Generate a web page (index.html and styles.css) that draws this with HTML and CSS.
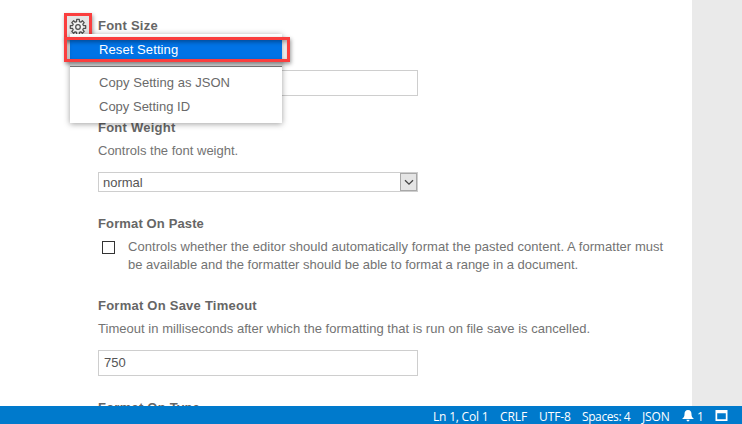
FILE: index.html
```html
<!DOCTYPE html>
<html lang="en">
<head>
<meta charset="utf-8">
<title>Settings</title>
<link rel="stylesheet" href="styles.css">
</head>
<body>
<div class="window">
  <div class="workspace">
    <main class="settings">
      <section class="setting font-size">
        <h2><span class="t-size">Font Size</span></h2>
        <div class="field"></div>
        <button class="gear" aria-label="More actions">
          <svg width="18" height="18" viewBox="0 0 18 18" fill="#f2f2f2" stroke="#505050" stroke-width="1.25" stroke-linejoin="round">
            <path d="M7.700 1.300h2.600l.1 2.300 1.430.59 1.550-1.410 1.840 1.840-1.410 1.550.59 1.430 2.300.1v2.600l-2.300.1-.59 1.430 1.410 1.550-1.840 1.840-1.550-1.410-1.430.59-.1 2.300H7.700l-.1-2.300-1.430-.59-1.550 1.410-1.840-1.840 1.410-1.550-.59-1.430-2.300-.1V7.700l2.300-.1.59-1.430-1.410-1.550 1.840-1.840 1.550 1.410 1.430-.59z"/>
            <circle cx="9" cy="9" r="2.300"/>
          </svg>
        </button>
        <div class="menu">
          <div class="item selected"><span class="t-reset">Reset Setting</span></div>
          <div class="separator"></div>
          <div class="item"><span class="t-json">Copy Setting as JSON</span></div>
          <div class="item"><span class="t-id">Copy Setting ID</span></div>
        </div>
        <div class="callout"></div>
      </section>
      <section class="setting font-weight">
        <h2><span class="t-weight">Font Weight</span></h2>
        <p><span class="t-controls">Controls the font weight.</span></p>
        <div class="field select"><span class="t-normal">normal</span>
          <span class="arrow"><svg width="10" height="7" viewBox="0 0 10 7" fill="none" stroke="#444" stroke-width="1.3"><path d="M1 1.2l4 4 4-4"/></svg></span>
        </div>
      </section>
      <section class="setting paste">
        <h2><span class="t-paste">Format On Paste</span></h2>
        <div class="check-row">
          <span class="box"></span>
          <p><span class="t-line1">Controls whether the editor should automatically format the pasted content. A formatter must</span><br><span class="t-line2">be available and the formatter should be able to format a range in a document.</span></p>
        </div>
      </section>
      <section class="setting timeout">
        <h2><span class="t-timeout">Format On Save Timeout</span></h2>
        <p><span class="t-desc">Timeout in milliseconds after which the formatting that is run on file save is cancelled.</span></p>
        <div class="field"><span class="t-750">750</span></div>
      </section>
      <section class="setting">
        <h2><span class="t-type">Format On Type</span></h2>
      </section>
    </main>
    <aside class="gutter"></aside>
  </div>
  <footer class="status">
    <span class="s-pos">Ln 1, Col 1</span>
    <span class="s-eol">CRLF</span>
    <span class="s-enc">UTF-8</span>
    <span class="s-spaces">Spaces: 4</span>
    <span class="s-lang">JSON</span>
    <svg class="bell" width="12" height="12" viewBox="0 0 12 12" fill="#fff"><path d="M6 0C3.500 0 2.500 2 2.500 4.200 2.500 6.600 1.800 7.400.5 8.300V9h11v-.7C10.200 7.400 9.500 6.600 9.500 4.200 9.500 2 8.500 0 6 0zM4.500 9.800h3C7.400 11 6.800 11.500 6 11.500S4.600 11 4.500 9.800z"/></svg>
    <span class="s-count">1</span>
    <svg class="panel" width="13" height="11" viewBox="0 0 13 11"><path fill="#fff" fill-rule="evenodd" d="M.5 0h12v11H.5zM2.200 3.300v6h8.600v-6z"/></svg>
  </footer>
</div>
</body>
</html>
```
FILE: styles.css
```css
* { box-sizing: border-box; }
body { margin: 0; font-family: "Liberation Sans", Arial, sans-serif; font-size: 13px; color: #737373; }
.window { width: 742px; height: 424px; display: flex; flex-direction: column; overflow: hidden; background: #fff; }
.workspace { flex: 1; min-height: 0; display: flex; overflow: hidden; }
.settings { width: 692px; padding: 16px 0 0 98px; }
.gutter { flex: 1; background: #eaeaea; }
.setting { position: relative; }
h2 { margin: 0; height: 19px; font-size: 13px; line-height: 19px; font-weight: bold; color: #666; letter-spacing: .24px; }
p { margin: 0; line-height: 18px; }
span { white-space: nowrap; }
.t-paste { letter-spacing: .13px; }
.t-line1 { letter-spacing: .053px; }
.t-line2 { letter-spacing: -.02px; }
.t-desc { letter-spacing: .03px; }
.t-reset { letter-spacing: .09px; }
.t-json { letter-spacing: .05px; }
.field { width: 320px; height: 26px; border: 1px solid #cecece; padding-left: 5px; display: flex; align-items: center; color: #555; }
.t-750 { margin-top: -1px; }
.font-size { height: 102px; z-index: 2; }
.font-size .field { margin-top: 35px; }
.gear { position: absolute; left: -34px; top: -3px; width: 28px; height: 27px; padding: 0; border: 3px solid #fa3e3e; background: #e4e4e4; box-shadow: 1px 2px 4px rgba(0,0,0,.4); display: flex; align-items: center; justify-content: center; }
.menu { position: absolute; left: -28px; top: 18px; width: 212px; height: 89px; padding-top: 5px; background: #fff; box-shadow: 0 1px 6px rgba(0,0,0,.38); color: #6a6a6a; }
.item { height: 24px; line-height: 24px; padding-left: 29px; }
.selected { height: 22px; line-height: 21px; background: #0073e6; color: #fff; }
.separator { height: 6px; margin-bottom: 4px; border-bottom: 1px solid #777; background: #d2d2d2; }
.callout { position: absolute; left: -34px; top: 21px; width: 226px; height: 25px; border: 3px solid #fa3e3e; box-shadow: 1px 2px 4px rgba(0,0,0,.4), inset 1px 2px 4px rgba(0,0,0,.35); }
.font-weight { height: 96px; }
.font-weight p { margin-top: 5px; }
.select { height: 20px; margin-top: 12px; padding-left: 4px; }
.arrow { margin-left: auto; width: 17px; height: 18px; border: 1px solid #a8a8a8; background: #e5e5e5; display: flex; align-items: center; justify-content: center; }
.paste { height: 82px; }
.check-row { display: flex; margin-top: 5px; }
.box { width: 13px; height: 13px; border: 1px solid #333; margin: 3px 13px 0 4px; flex: none; }
.timeout { height: 102px; }
.timeout p { margin-top: 5px; }
.timeout .field { margin-top: 12px; }
.status { height: 18px; background: #007acc; color: #fff; display: flex; align-items: center; font: 12px/18px "Open Sans", sans-serif; padding-left: 433px; }
.s-pos { width: 67px; letter-spacing: -.2px; }
.s-eol { width: 39px; letter-spacing: -.1px; }
.s-enc { width: 43px; letter-spacing: -.1px; }
.s-spaces { width: 60px; letter-spacing: -.4px; }
.s-lang { width: 40px; letter-spacing: -.1px; }
.s-count { width: 18px; margin-left: 3px; }
.bell, .panel { flex: none; margin-top: 1px; }
.status span { padding-top: 3px; }
```
